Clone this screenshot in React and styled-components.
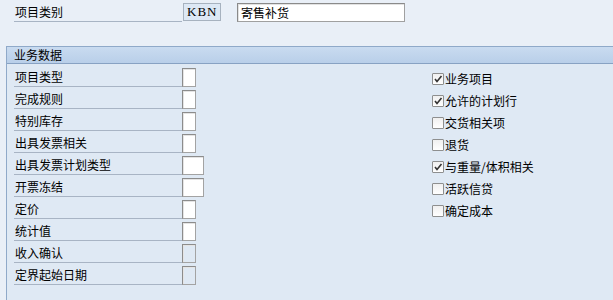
import React from "react";
import styled, { createGlobalStyle } from "styled-components";

const Global = createGlobalStyle`
  html, body { margin: 0; padding: 0; }
  body {
    background: #e9eff7;
    font-family: "Noto Sans CJK SC", "Noto Sans", sans-serif;
    font-size: 12px;
    color: #000;
  }
`;

const Page = styled.div`
  width: 613px;
  height: 300px;
  overflow: hidden;
  background: #e9eff7;
`;

const Top = styled.div`
  height: 46px;
  padding: 3px 0 0 14px;
  box-sizing: border-box;
  display: flex;
  align-items: flex-start;
`;

const Label = styled.div`
  width: ${(p) => p.$w || 168}px;
  height: 19px;
  line-height: 18px;
  box-sizing: border-box;
  border-bottom: 1px solid #a8b4c4;
  white-space: nowrap;
  padding-left: 1px;
`;

const KeyBox = styled.div`
  margin-left: 1px;
  width: 38px;
  height: 18px;
  box-sizing: border-box;
  border: 1px solid #a7b2bf;
  background: #dde8f5;
  font-family: "Liberation Serif", "DejaVu Serif", serif;
  font-size: 13px;
  letter-spacing: 1px;
  line-height: 16px;
  padding-left: 3px;
`;

const TextBox = styled.div`
  margin-left: 16px;
  width: 168px;
  height: 19px;
  box-sizing: border-box;
  border: 1px solid #a0a0a0;
  border-top-color: #8a8a8a;
  border-left-color: #8a8a8a;
  box-shadow: inset 1px 1px 0 #e2e2e2;
  background: #fff;
  line-height: 17px;
  padding-left: 3px;
`;

const Panel = styled.div`
  margin-left: 6px;
  border-left: 1px solid #8fa9c9;
  border-top: 1px solid #8fa9c9;
  background: #dfe9f4;
  height: 254px;
`;

const Header = styled.div`
  height: 16px;
  border-bottom: 1px solid #88a2c3;
  background: linear-gradient(#c9dbf0, #b9cfe9);
  line-height: 16px;
  padding-left: 7px;
`;

const Body = styled.div`
  display: grid;
  grid-template-columns: 418px 1fr;
  padding: 4px 0 0 7px;
`;

const Col = styled.div`
  display: flex;
  flex-direction: column;
`;

const Row = styled.div`
  height: 22px;
  display: flex;
  align-items: flex-start;
`;

const Field = styled.div`
  width: ${(p) => (p.$wide ? 22 : 14)}px;
  height: 19px;
  box-sizing: border-box;
  border: 1px solid #a3a3a3;
  border-top-color: #8c8c8c;
  border-left-color: #8c8c8c;
  box-shadow: inset 1px 1px 0 #e4e4e4;
  background: ${(p) => (p.$disabled ? "#dfe9f4" : "#fff")};
`;

const CheckRow = styled.label`
  height: 22px;
  display: flex;
  align-items: center;
  gap: 1px;
  padding-bottom: 1px;
  box-sizing: border-box;
  white-space: nowrap;
`;

const Box = styled.span`
  width: 12px;
  height: 12px;
  box-sizing: border-box;
  border: 1px solid #8e8f8f;
  border-radius: 1px;
  background: linear-gradient(#f0f0f0, #ffffff);
  display: inline-flex;
  align-items: center;
  justify-content: center;
`;

const Check = () => (
  <svg width="10" height="10" viewBox="0 0 10 10">
    <path d="M2 5 L4 7.5 L8.5 2" fill="none" stroke="#333" strokeWidth="1.6" />
  </svg>
);

const left = [
  { t: "项目类型" },
  { t: "完成规则" },
  { t: "特别库存" },
  { t: "出具发票相关" },
  { t: "出具发票计划类型", wide: true },
  { t: "开票冻结", wide: true },
  { t: "定价" },
  { t: "统计值" },
  { t: "收入确认", disabled: true },
  { t: "定界起始日期", disabled: true },
];

const right = [
  { t: "业务项目", c: true },
  { t: "允许的计划行", c: true },
  { t: "交货相关项", c: false },
  { t: "退货", c: false },
  { t: "与重量/体积相关", c: true },
  { t: "活跃信贷", c: false },
  { t: "确定成本", c: false },
];

export default function App() {
  return (
    <Page>
      <Global />
      <Top>
        <Label>项目类别</Label>
        <KeyBox>KBN</KeyBox>
        <TextBox>寄售补货</TextBox>
      </Top>
      <Panel>
        <Header>业务数据</Header>
        <Body>
          <Col>
            {left.map((r) => (
              <Row key={r.t}>
                <Label>{r.t}</Label>
                <Field $wide={r.wide} $disabled={r.disabled} />
              </Row>
            ))}
          </Col>
          <Col>
            {right.map((r) => (
              <CheckRow key={r.t}>
                <Box>{r.c && <Check />}</Box>
                {r.t}
              </CheckRow>
            ))}
          </Col>
        </Body>
      </Panel>
    </Page>
  );
}
